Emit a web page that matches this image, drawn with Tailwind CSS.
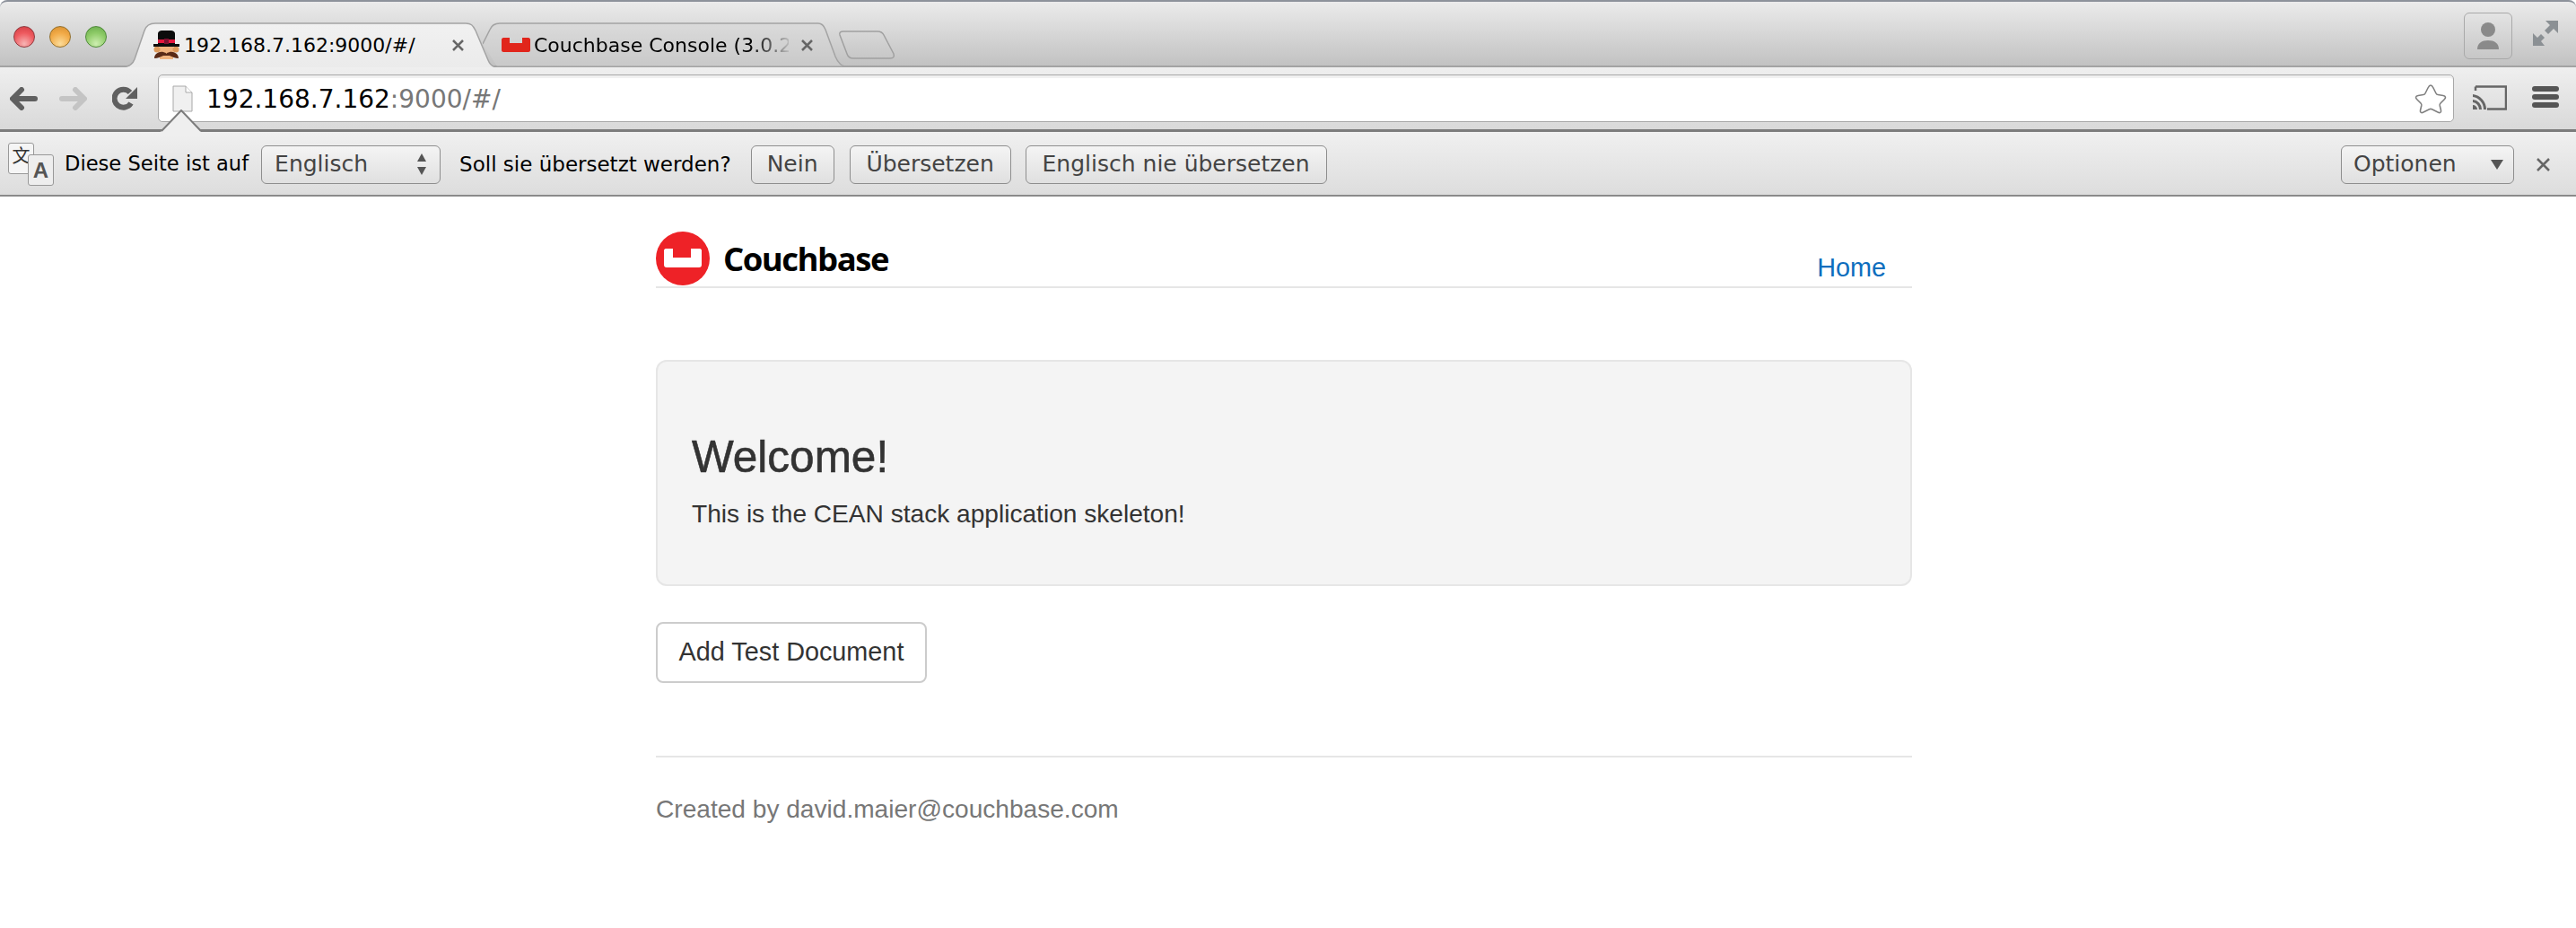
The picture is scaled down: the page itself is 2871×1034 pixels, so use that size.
<!DOCTYPE html>
<html lang="de">

<head>
  <meta charset="UTF-8" />
  <title>192.168.7.162:9000/#/</title>
  <script src="https://cdn.jsdelivr.net/npm/@tailwindcss/browser@4"></script>
</head>

<body class="bg-white min-h-screen overflow-hidden font-['Liberation_Sans',sans-serif]">

  <!-- Tab strip -->
  <div class="h-[75px] flex bg-gradient-to-b from-[#ebebeb] to-[#c2c2c2] border-t-2 border-b-2 border-t-[#8d929b] border-b-[#a3a3a3] rounded-tr-lg rounded-tl-lg font-['DejaVu_Sans',sans-serif]">
    <!-- Traffic lights -->
    <div class="w-[137px] flex items-center gap-[16px] pl-[15px] pt-[1px] -mt-[1px] self-start h-[78px] shrink-0">
      <span class="w-[24px] h-[24px] rounded-full border border-[#8f3a3f] bg-[radial-gradient(circle_at_50%_85%,#f7b4b4,#ee5a5f_55%,#cf3a40)]"></span>
      <span class="w-[24px] h-[24px] rounded-full border border-[#94702c] bg-[radial-gradient(circle_at_50%_85%,#fbdc9a,#f2ab48_55%,#d68d2c)]"></span>
      <span class="w-[24px] h-[24px] rounded-full border border-[#4f8a3a] bg-[radial-gradient(circle_at_50%_85%,#cdeeb0,#8ecb68_55%,#66a94a)]"></span>
    </div>

    <!-- Active tab -->
    <div class="relative z-10 w-[416px] h-[50px] mt-[23px] shrink-0 flex items-center text-[22px] text-black">
      <svg class="absolute inset-0" width="416" height="50" viewBox="0 0 416 50">
        <defs>
          <linearGradient id="activeTab" x1="0" y1="0" x2="0" y2="1">
            <stop offset="0" stop-color="#f1f1f1" />
            <stop offset="1" stop-color="#ebebeb" />
          </linearGradient>
        </defs>
        <path d="M0 50C8 50 11 46 13 41L24 9C26 3 30 1 36 1H382C388 1 390 3 393 9L407 42C409 47 412 50 416 50Z" fill="url(#activeTab)" />
        <path d="M0 49.500C8 49.500 11 46 13 41L24 9C26 3 30 1 36 1H382C388 1 390 3 393 9L407 42C409 47 412 49.500 416 49.500" fill="none" stroke="#a3a3a3" stroke-width="1.500" />
      </svg>
      <!-- Yeoman favicon -->
      <svg class="relative ml-[34px] shrink-0" width="29" height="32" viewBox="0 0 29 32">
        <rect x="7" y="16" width="15" height="16" fill="#f0b37e" />
        <circle cx="4" cy="21" r="3.500" fill="#dd9a5c" />
        <circle cx="25" cy="21" r="3.500" fill="#dd9a5c" />
        <path d="M5 4C5 1 7 0 10 0H19C22 0 24 1 24 4V15H5Z" fill="#0c0c0c" />
        <rect x="5" y="10" width="19" height="4" fill="#e3173e" />
        <rect x="12" y="9" width="5" height="6" fill="#7d1030" />
        <rect x="0" y="15" width="29" height="3" fill="#0c0c0c" />
        <path d="M1 31C1 26 6 23 11 24C13 24.500 14 25 14.500 26C15 25 16 24.500 18 24C23 23 28 26 28 31C24 31 21 29 18 28C16 28 13 28 11 28C8 29 5 31 1 31Z" fill="#5a2a16" />
      </svg>
      <span class="relative ml-[5px] whitespace-nowrap">192.168.7.162:9000/#/</span>
      <svg class="relative ml-[40px] shrink-0" width="15" height="15" viewBox="0 0 15 15"><path d="M2 2L13 13M13 2L2 13" stroke="#666" stroke-width="2.500" /></svg>
    </div>

    <!-- Background tab -->
    <div class="relative w-[405px] h-[50px] mt-[23px] -ml-[15px] shrink-0 flex items-center text-[22px] text-black">
      <svg class="absolute inset-0" width="405" height="50" viewBox="0 0 405 50">
        <path d="M0 24L8 8C10 3 13 1 19 1H374C378 1 380 3 382 8L393 38C396 45 400 49 405 49H16Z" fill="#d6d6d6" fill-opacity="0.35" />
        <path d="M0 24L8 8C10 3 13 1 19 1H374C378 1 380 3 382 8L393 38C396 45 400 49 405 49" fill="none" stroke="#a3a3a3" stroke-width="1.500" />
      </svg>
      <!-- Couchbase favicon -->
      <svg class="relative ml-[21px] shrink-0" width="32" height="16" viewBox="0 0 32 16">
        <path d="M2 0H9V6H23V0H30C31 0 32 1 32 2V14C32 15 31 16 30 16H2C1 16 0 15 0 14V2C0 1 1 0 2 0Z" fill="#e1251b" />
      </svg>
      <span class="relative ml-[4px] w-[284px] whitespace-nowrap bg-gradient-to-r from-black from-[82%] to-[#bbb] bg-clip-text text-transparent">Couchbase Console (3.0.2-</span>
      <svg class="relative ml-[13px] shrink-0" width="15" height="15" viewBox="0 0 15 15"><path d="M2 2L13 13M13 2L2 13" stroke="#666" stroke-width="2.500" /></svg>
    </div>

    <!-- New tab button -->
    <svg class="-ml-[9px] mt-[32px] shrink-0" width="64" height="32" viewBox="0 0 64 32">
      <path d="M2 5C1 2 3 1 6 1H44C48 1 50 3 51 5L62 26C63 29 62 31 58 31H17C13 31 11 29 10 26Z" fill="none" stroke="#a0a0a0" stroke-width="1.500" />
    </svg>

    <!-- Profile and fullscreen -->
    <div class="ml-auto flex items-start shrink-0 pt-[12px] pr-[20px] gap-[23px]">
      <div class="w-[54px] h-[52px] rounded-md border border-[#a9a9a9] flex items-center justify-center">
        <svg width="26" height="32" viewBox="0 0 26 32">
          <circle cx="13" cy="9" r="8" fill="#8a8a8a" />
          <path d="M1 31C1 24 6 21 13 21C20 21 25 24 25 31Z" fill="#8a8a8a" />
        </svg>
      </div>
      <svg class="mt-[9px]" width="28" height="28" viewBox="0 0 28 28" fill="#8b9094">
        <path d="M14 0H28V14L23 9L17 15L13 11L19 5Z" />
        <path d="M0 14L5 19L9 15L13 19L9 23L13 28H0Z" />
      </svg>
    </div>
  </div>

  <!-- Toolbar -->
  <div class="relative h-[72px] flex items-start bg-gradient-to-b from-[#efefef] to-[#d9d9d9] border-b-[3px] border-b-[#7c7c7c] font-['DejaVu_Sans',sans-serif]">
    <svg class="ml-[11px] mt-[22px] shrink-0" width="31" height="26" viewBox="0 0 31 26">
      <path d="M13 3L3 13L13 23M4 13H28" fill="none" stroke="#606060" stroke-width="6" stroke-linecap="round" stroke-linejoin="round" />
    </svg>
    <svg class="ml-[24px] mt-[22px] shrink-0" width="31" height="26" viewBox="0 0 31 26">
      <path d="M18 3L28 13L18 23M3 13H27" fill="none" stroke="#c4c4c4" stroke-width="6" stroke-linecap="round" stroke-linejoin="round" />
    </svg>
    <svg class="ml-[28px] mt-[21px] shrink-0" width="28" height="28" viewBox="0 0 28 28">
      <path d="M21 19A10 10 0 1 1 20 7" fill="none" stroke="#606060" stroke-width="6" />
      <path d="M28 1V14H15Z" fill="#606060" />
    </svg>

    <!-- Omnibox -->
    <div class="ml-[23px] mt-[8px] w-[2559px] h-[53px] shrink-0 bg-white border border-[#a8a8a8] rounded-[5px] flex items-center shadow-[inset_0_3px_1px_#f0f0f0]">
      <svg class="ml-[15px] mt-[1px] shrink-0" width="23" height="30" viewBox="0 0 23 30">
        <path d="M1 1H15L22 8V29H1Z" fill="#f0f0f0" stroke="#a8a8a8" />
        <path d="M15 1V8H22" fill="#fff" stroke="#a8a8a8" />
      </svg>
      <span class="ml-[15px] mt-[2px] text-[28px] text-black whitespace-nowrap">192.168.7.162<span class="text-[#777]">:9000/#/</span></span>
      <svg class="ml-auto mr-[7px] shrink-0" width="36" height="34" viewBox="0 0 36 34">
        <path d="M18 2C19.500 2 20 3 21 5L24 11C24.500 12 25 12.500 26 12.500L32 13.500C35 14 35 16 33.500 17.500L29 22C28 23 28 23.500 28.200 24.500L29.500 30C30 32.500 28 33 26.500 32.200L19.500 28.800C18.500 28.300 17.500 28.300 16.500 28.800L9.500 32.200C8 33 6 32.500 6.500 30L7.800 24.500C8 23.500 8 23 7 22L2.500 17.500C1 16 1 14 4 13.500L10 12.500C11 12.500 11.500 12 12 11L15 5C16 3 16.500 2 18 2Z" fill="#fff" stroke="#808080" stroke-width="1.600" />
      </svg>
    </div>

    <!-- Cast and menu -->
    <svg class="ml-[21px] mt-[20px] shrink-0" width="38" height="28" viewBox="0 0 38 28">
      <path d="M3 1.500H37V26.500H16M3 1.500V6" fill="none" stroke="#666" stroke-width="2.500" />
      <path d="M0 10A17 17 0 0 1 15 27H12A14 14 0 0 0 0 13Z M0 16A11 11 0 0 1 10 27H7A8 8 0 0 0 0 19Z M0 22A5 5 0 0 1 5 27H0Z" fill="#666" />
    </svg>
    <div class="ml-[28px] mt-[21px] w-[30px] flex flex-col gap-[3px] shrink-0">
      <span class="h-[6px] rounded-full bg-[#555]"></span>
      <span class="h-[6px] rounded-full bg-[#555]"></span>
      <span class="h-[6px] rounded-full bg-[#555]"></span>
    </div>

    <!-- Notch pointing at the page icon -->
    <svg class="absolute left-[178px] top-[47px]" width="48" height="28" viewBox="0 0 48 28">
      <path d="M0 26L24 1L47 26V28H0Z" fill="#efefef" />
      <path d="M2 24L24 1L46 24" fill="none" stroke="#7c7c7c" stroke-width="2" />
    </svg>
  </div>

  <!-- Translate bar -->
  <div class="h-[72px] pt-[2px] flex items-center bg-gradient-to-b from-[#f0f0f0] to-[#dddddd] border-b-2 border-b-[#8a8a8a] text-[25px] font-['DejaVu_Sans',sans-serif]">
    <div class="relative ml-[9px] w-[50px] h-[48px] shrink-0">
      <div class="w-[29px] h-[35px] rounded-[3px] border border-[#999] bg-[#f5f5f5] flex justify-center pt-[1px] text-[20px] leading-[24px] font-['Noto_Sans_CJK_SC',sans-serif] text-[#333]">文</div>
      <div class="absolute left-[22px] top-[13px] w-[29px] h-[35px] rounded-[3px] border border-[#999] bg-[#eee] flex items-center justify-center text-[24px] font-bold font-['Liberation_Sans',sans-serif] text-[#555]">A</div>
    </div>
    <span class="ml-[13px] text-[22.600px] text-black whitespace-nowrap">Diese Seite ist auf</span>
    <div class="ml-[14px] w-[200px] h-[43px] shrink-0 flex items-center justify-between px-[14px] rounded-md border-[1.500px] border-[#8e8e8e] bg-gradient-to-b from-[#f4f4f4] to-[#e0e0e0] text-[#444]">
      Englisch
      <svg width="12" height="26" viewBox="0 0 12 26" fill="#555"><path d="M6 1L11 10H1Z" /><path d="M1 16H11L6 25Z" /></svg>
    </div>
    <span class="ml-[21px] text-[23px] text-black whitespace-nowrap">Soll sie übersetzt werden?</span>
    <button class="ml-[22px] w-[93px] h-[43px] rounded-md border-[1.500px] border-[#8e8e8e] bg-gradient-to-b from-[#f4f4f4] to-[#e0e0e0] text-[#444]">Nein</button>
    <button class="ml-[17px] w-[180px] h-[43px] rounded-md border-[1.500px] border-[#8e8e8e] bg-gradient-to-b from-[#f4f4f4] to-[#e0e0e0] text-[#444]">Übersetzen</button>
    <button class="ml-[16px] w-[336px] h-[43px] rounded-md border-[1.500px] border-[#8e8e8e] bg-gradient-to-b from-[#f4f4f4] to-[#e0e0e0] text-[#444] whitespace-nowrap">Englisch nie übersetzen</button>
    <div class="ml-auto w-[193px] h-[43px] shrink-0 flex items-center justify-between pl-[13px] pr-[11px] rounded-md border-[1.500px] border-[#8e8e8e] bg-gradient-to-b from-[#f4f4f4] to-[#e0e0e0] text-[#444]">
      Optionen
      <svg width="14" height="11" viewBox="0 0 14 11" fill="#555"><path d="M0 0H14L7 11Z" /></svg>
    </div>
    <svg class="ml-[25px] mr-[29px] shrink-0" width="15" height="15" viewBox="0 0 15 15"><path d="M1 1L14 14M14 1L1 14" stroke="#666" stroke-width="2.500" /></svg>
  </div>

  <!-- Page content -->
  <main class="ml-[731px] w-[1400px] text-[28.800px] text-[#333]">
    <header class="h-[102px] flex items-end justify-between border-b-2 border-[#e6e6e6]">
      <div class="flex items-center gap-[15px] mb-[1px]">
        <svg width="60" height="60" viewBox="0 0 60 60">
          <circle cx="30" cy="30" r="30" fill="#ee2227" />
          <path d="M9 21C9 20 10 19 11 19H19V29H39V19H49C50 19 51 20 51 21V37C51 39 50 40 48 40H12C10 40 9 39 9 37Z" fill="#fff" />
        </svg>
        <span class="font-['Open_Sans',sans-serif] font-bold text-[36.500px] tracking-[-1.500px] text-black leading-[60px]">Couchbase</span>
      </div>
      <a href="#" class="mr-[29px] -mb-[1px] text-[#0d6ebe]">Home</a>
    </header>

    <section class="mt-[80px] h-[252px] bg-[#f4f4f4] border-2 border-[#e6e6e6] rounded-xl px-[38px] pt-[79px]">
      <h1 class="text-[49.500px] leading-[54px] text-[#333] [-webkit-text-stroke:0.6px_#333]">Welcome!</h1>
      <p class="mt-[16px] leading-[41px] text-[28.100px]">This is the CEAN stack application skeleton!</p>
    </section>

    <button class="mt-[40px] h-[68px] w-[302px] bg-white border-2 border-[#cccccc] rounded-lg text-[#333]">Add Test Document</button>

    <footer class="mt-[81px] border-t-2 border-[#e6e6e6] pt-[37px] text-[#777] leading-[41px] text-[28.100px]">Created by david.maier@couchbase.com</footer>
  </main>

</body>

</html>
